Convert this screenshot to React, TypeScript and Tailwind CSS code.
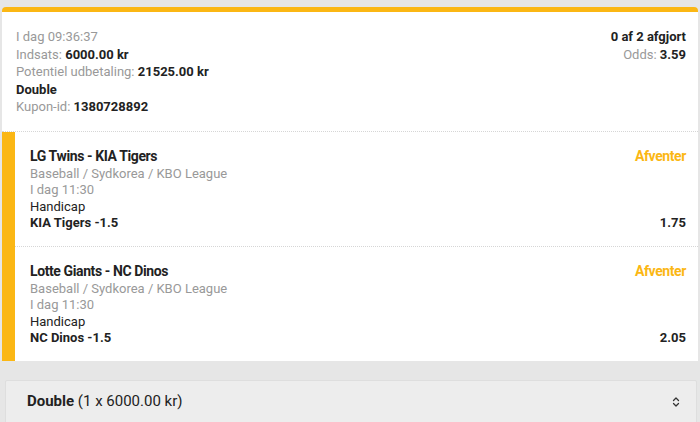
import { ChevronsUpDown } from 'lucide-react';

const selections = [
  { id: 1, match: 'LG Twins - KIA Tigers', pick: 'KIA Tigers -1.5', odds: '1.75' },
  { id: 2, match: 'Lotte Giants - NC Dinos', pick: 'NC Dinos -1.5', odds: '2.05' },
];

export default function App() {
  return (
    <div className="w-[700px] h-[422px] overflow-hidden bg-[#e6e6e6] pt-[7px] font-['Roboto',sans-serif] text-[13px] leading-[17.5px] text-[#222]">
      {/* Coupon card */}
      <div className="mx-[2px] rounded-t-[4px] border-t-[5px] border-[#fbb714] bg-white">
        <div className="flex justify-between pl-[14px] pr-[12px] pt-[16px] pb-[15px] border-b border-dotted border-[#d6d6d6]">
          <div>
            <div className="text-[#999]">I dag 09:36:37</div>
            <div className="text-[#999]">
              Indsats: <span className="font-bold text-[#222]">6000.00 kr</span>
            </div>
            <div className="text-[#999]">
              Potentiel udbetaling: <span className="font-bold text-[#222]">21525.00 kr</span>
            </div>
            <div className="font-bold">Double</div>
            <div className="text-[#999]">
              Kupon-id: <span className="font-bold text-[#222]">1380728892</span>
            </div>
          </div>
          <div className="text-right">
            <div className="font-bold">0 af 2 afgjort</div>
            <div className="text-[#999]">
              Odds: <span className="font-bold text-[#222]">3.59</span>
            </div>
          </div>
        </div>

        {selections.map((s, i) => (
          <div key={s.id} className="flex">
            <div className="w-[13px] shrink-0 bg-[#fbb714]" />
            <div
              className={`flex-1 flex justify-between pl-[15px] pr-[12px] pt-[15px] pb-[14px] leading-[16.5px] ${
                i === 0 ? 'border-b border-dotted border-[#d6d6d6]' : ''
              }`}
            >
              <div>
                <div className="font-bold text-[14px] leading-[19px] tracking-[-0.4px]">{s.match}</div>
                <div className="text-[#999]">Baseball / Sydkorea / KBO League</div>
                <div className="text-[#999]">I dag 11:30</div>
                <div>Handicap</div>
                <div className="font-bold">{s.pick}</div>
              </div>
              <div className="flex flex-col justify-between items-end">
                <div className="font-bold text-[14px] leading-[19px] text-[#fbb714] tracking-[-0.4px]">Afventer</div>
                <div className="font-bold">{s.odds}</div>
              </div>
            </div>
          </div>
        ))}
      </div>

      {/* Bet type select */}
      <div className="mt-[19px] ml-[5px] mr-[3px] h-[44px] flex items-center justify-between pl-[21px] pr-[14px] bg-[#ededed] border border-[#dedede] rounded-[2px] text-[15px]">
        <div>
          <span className="font-bold">Double</span> (1 x 6000.00 kr)
        </div>
        <ChevronsUpDown size={12} strokeWidth={2.5} className="text-[#333]" />
      </div>
    </div>
  );
}
